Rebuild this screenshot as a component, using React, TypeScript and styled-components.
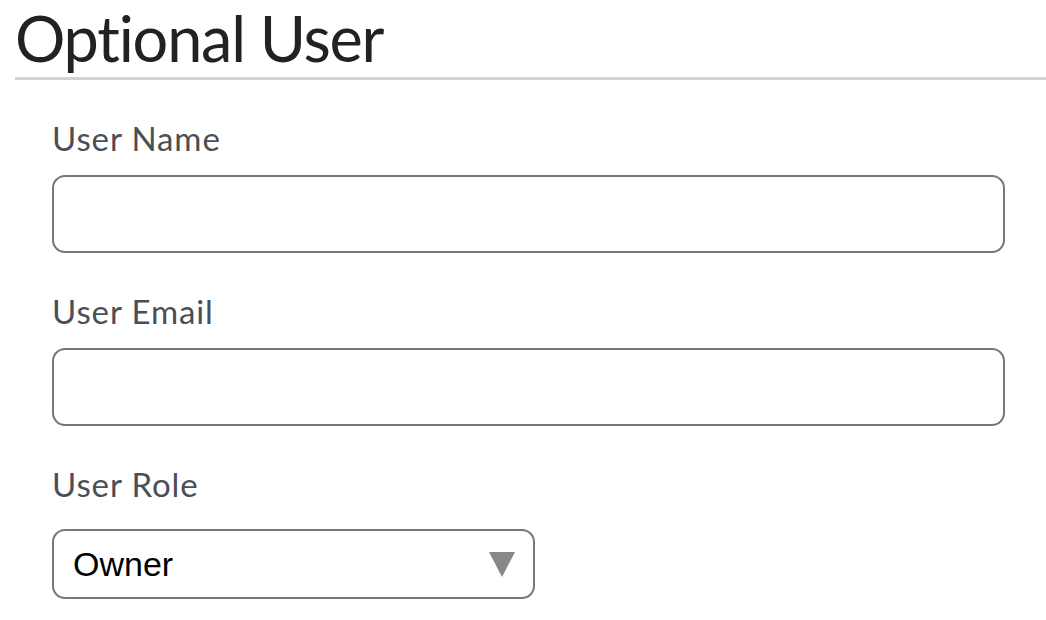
import styled, { createGlobalStyle } from 'styled-components';

const GlobalStyle = createGlobalStyle`
  html, body {
    margin: 0;
    padding: 0;
    background: #ffffff;
  }
`;

const Page = styled.section`
  width: 100%;
  padding: 6px 0 0 15px;
  box-sizing: border-box;
  font-family: 'Lato', 'Open Sans', sans-serif;
`;

const Title = styled.h1`
  margin: 0;
  font-size: 63px;
  font-weight: 400;
  letter-spacing: -1.2px;
  line-height: 64px;
  color: #222222;
  padding-bottom: 7px;
  border-bottom: 3px solid #d3d3d3;
`;

const Form = styled.form`
  display: flex;
  flex-direction: column;
  padding: 38px 41px 0 37px;
`;

const Field = styled.div`
  display: flex;
  flex-direction: column;
  margin-bottom: 38px;
`;

const Label = styled.label<{ $gap?: number }>`
  font-size: 33px;
  line-height: 40px;
  letter-spacing: 0.9px;
  color: #4a4e56;
  margin-bottom: ${(p) => p.$gap ?? 17}px;
`;

const Input = styled.input`
  height: 78px;
  box-sizing: border-box;
  border: 2px solid #737780;
  border-radius: 13px;
  background: #fff;
  outline: none;
`;

const SelectWrap = styled.div`
  position: relative;
  width: 483px;
`;

const Select = styled.select`
  width: 100%;
  height: 70px;
  box-sizing: border-box;
  appearance: none;
  border: 2px solid #737780;
  border-radius: 13px;
  background: #fff;
  padding: 0 0 0 19px;
  font-family: 'Liberation Sans', Arial, sans-serif;
  font-size: 34px;
  color: #000;
  outline: none;
`;

const Arrow = styled.svg`
  position: absolute;
  right: 20px;
  top: 23px;
  pointer-events: none;
`;

export default function App() {
  return (
    <>
      <GlobalStyle />
      <Page>
        <Title>Optional User</Title>
        <Form>
          <Field>
            <Label>User Name</Label>
            <Input type="text" />
          </Field>
          <Field>
            <Label>User Email</Label>
            <Input type="email" />
          </Field>
          <Field>
            <Label $gap={25}>User Role</Label>
            <SelectWrap>
              <Select defaultValue="owner">
                <option value="owner">Owner</option>
                <option value="admin">Admin</option>
                <option value="member">Member</option>
              </Select>
              <Arrow width="26" height="26" viewBox="0 0 26 26">
                <polygon points="0,0 26,0 13,25" fill="#888888" />
              </Arrow>
            </SelectWrap>
          </Field>
        </Form>
      </Page>
    </>
  );
}
